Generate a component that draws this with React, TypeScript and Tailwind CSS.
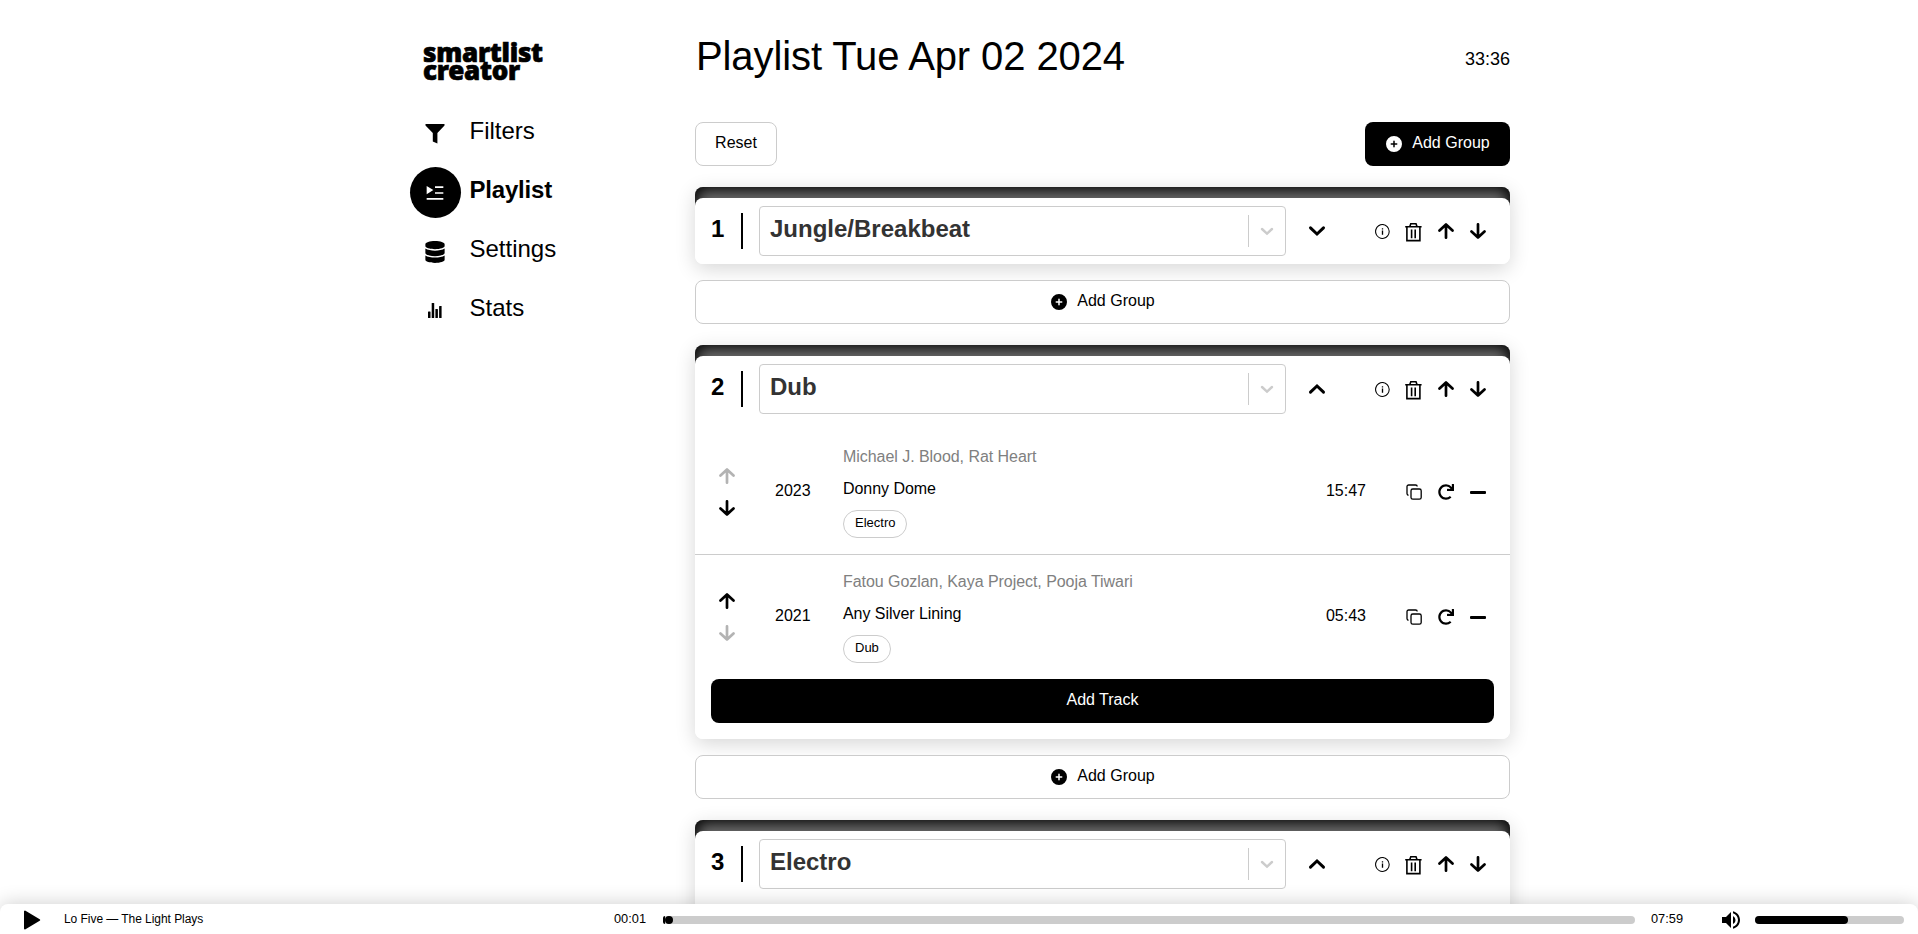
import React from "react";
import { FaDatabase, FaRedo } from "react-icons/fa";
import { FaCirclePlus } from "react-icons/fa6";
import { RiPlayList2Fill } from "react-icons/ri";
import { MdVolumeUp } from "react-icons/md";
import { VscInfo } from "react-icons/vsc";

type Track = { artist: string; title: string; year: string; duration: string; tag: string };
type Group = { name: string; open: boolean; tracks: Track[] };

const groups: Group[] = [
  { name: "Jungle/Breakbeat", open: false, tracks: [] },
  {
    name: "Dub",
    open: true,
    tracks: [
      { artist: "Michael J. Blood, Rat Heart", title: "Donny Dome", year: "2023", duration: "15:47", tag: "Electro" },
      { artist: "Fatou Gozlan, Kaya Project, Pooja Tiwari", title: "Any Silver Lining", year: "2021", duration: "05:43", tag: "Dub" },
    ],
  },
  { name: "Electro", open: true, tracks: [] },
];

function FilterIcon() {
  return (
    <svg width="20" height="20" viewBox="0 0 20 20">
      <path d="M.5 0h19v1.6L12.4 9v10.6L7.8 17.6V9L.5 1.6z" />
    </svg>
  );
}

function StatsIcon() {
  return (
    <svg width="14" height="15" viewBox="0 0 14 15">
      <rect x="0" y="8.5" width="2.5" height="6.5" rx=".5" />
      <rect x="3.7" y="0" width="2.5" height="15" rx=".5" />
      <rect x="7.4" y="6" width="2.5" height="9" rx=".5" />
      <rect x="11.1" y="3" width="2.5" height="12" rx=".5" />
    </svg>
  );
}

function Arrow({ down = false, muted = false }: { down?: boolean; muted?: boolean }) {
  return (
    <svg
      width="16"
      height="16"
      viewBox="0 0 16 16"
      fill="none"
      stroke="currentColor"
      strokeWidth="2.7"
      strokeLinecap="round"
      strokeLinejoin="round"
      className={muted ? "text-[#b3b3b3]" : "text-black"}
    >
      {down ? <path d="M8 1.3v13.2M1.5 8.4L8 14.5l6.5-6.1" /> : <path d="M8 14.7V1.5M1.5 7.6L8 1.5l6.5 6.1" />}
    </svg>
  );
}

function Chevron({ up = false }: { up?: boolean }) {
  return (
    <svg width="18" height="12" viewBox="0 0 18 12" fill="none" stroke="currentColor" strokeWidth="3" strokeLinecap="round">
      {up ? <path d="M2.5 9.2L9 3l6.5 6.2" /> : <path d="M2.5 2.8L9 9l6.5-6.2" />}
    </svg>
  );
}

function TrashIcon() {
  return (
    <svg width="17" height="20" viewBox="0 0 17 20" fill="none" stroke="currentColor" strokeWidth="1.6">
      <path d="M.2 4.8h16.4M4.8 4.5l1-2.7h5.2l1 2.7M1.9 5v13.6h13V5" />
      <path d="M6.6 7.5v8.7M10.2 7.5v8.7" />
    </svg>
  );
}

function CopyIcon() {
  return (
    <svg width="16" height="16" viewBox="0 0 16 16" fill="none" stroke="currentColor" strokeWidth="1.3">
      <rect x="5" y="5" width="10.2" height="10.2" rx="1.8" />
      <path d="M2.6 11.2A1.6 1.6 0 0 1 1 9.6V2.6A1.6 1.6 0 0 1 2.6 1h7a1.6 1.6 0 0 1 1.6 1.6" />
    </svg>
  );
}

function AddGroup({ wide = false }: { wide?: boolean }) {
  return (
    <button
      className={
        wide
          ? "flex h-11 w-full items-center justify-center gap-2.5 rounded-lg border border-[#ccc] bg-white pl-px"
          : "flex h-11 w-[145px] items-center justify-center gap-2.5 rounded-lg bg-black pl-px text-white"
      }
    >
      <FaCirclePlus size={16} />
      <span className="pb-[3px]">Add Group</span>
    </button>
  );
}

function TrackRow({ track, first, last }: { track: Track; first: boolean; last: boolean }) {
  return (
    <div className={last ? "flex h-[124px] items-center px-4" : "flex h-[125px] items-center border-b border-[#ccc] px-4"}>
      <div className="flex w-8 flex-col items-center gap-4">
        <Arrow muted={first} />
        <Arrow down muted={last} />
      </div>
      <div className="ml-8 w-[68px] pb-[3px]">{track.year}</div>
      <div className="flex h-[92px] flex-1 flex-col items-start">
        <div className="h-8 pt-px leading-5 tracking-[-0.05px] text-[#808080]">{track.artist}</div>
        <div className="h-8 pt-px leading-5 tracking-[-0.05px]">{track.title}</div>
        <div className="flex h-7 items-center rounded-full border border-[#ccc] px-[11px] pb-0.5 text-[13px]">{track.tag}</div>
      </div>
      <div className="pb-[3px]">{track.duration}</div>
      <div className="ml-10 flex w-20 items-center justify-between">
        <CopyIcon />
        <FaRedo size={16} />
        <span className="h-[3px] w-4 rounded-[1px] bg-black" />
      </div>
      <div className="w-2" />
    </div>
  );
}

function GroupCard({ group, index }: { group: Group; index: number }) {
  return (
    <section className="rounded-lg bg-white shadow-[0_5px_20px_rgba(0,0,0,0.16)]">
      <div className="-mb-[29px] h-10 rounded-t-lg bg-[#6a6a6a] shadow-[inset_0_0_14px_3px_#000]" />
      <div className="relative rounded-lg bg-white">
        <div className="flex h-[66px] items-center pr-6 pl-4">
          <div className="w-[30px] pb-1 text-2xl font-bold">{index + 1}</div>
          <div className="h-9 w-0.5 bg-black" />
          <div className="ml-4 flex h-[50px] w-[527px] items-center rounded border border-[#ccc] pl-2.5">
            <div className="flex-1 pb-1 text-2xl font-bold text-[#333]">{group.name}</div>
            <div className="h-8 w-px bg-[#ccc]" />
            <div className="flex w-9 justify-center text-[#ccc]">
              <svg width="14" height="9" viewBox="0 0 14 9" fill="none" stroke="currentColor" strokeWidth="2.4" strokeLinecap="round">
                <path d="M2 2l5 4.6L12 2" />
              </svg>
            </div>
          </div>
          <div className="ml-[22px]">
            <Chevron up={group.open} />
          </div>
          <div className="ml-auto flex items-center gap-4">
            <VscInfo size={17} />
            <div className="-ml-1 pt-0.5 pl-0.5">
              <TrashIcon />
            </div>
            <Arrow />
            <Arrow down />
          </div>
        </div>
        {group.open && (
          <div className="min-h-[60px] pt-2 pb-4">
            {group.tracks.map((t, i) => (
              <TrackRow key={t.title} track={t} first={i === 0} last={i === group.tracks.length - 1} />
            ))}
            {group.tracks.length > 0 && (
              <div className="px-4">
                <button className="block h-11 w-full rounded-lg bg-black pb-[3px] text-white">Add Track</button>
              </div>
            )}
          </div>
        )}
      </div>
    </section>
  );
}

function NavItem({ icon, label, active = false }: { icon: React.ReactNode; label: string; active?: boolean }) {
  return (
    <a className="flex h-[59px] items-center gap-[8.5px]">
      <span
        className={
          active
            ? "flex size-[51px] items-center justify-center rounded-full bg-black pr-px text-white"
            : "flex size-[51px] items-center justify-center pr-px"
        }
      >
        {icon}
      </span>
      <span className={active ? "pb-[5px] text-2xl font-bold tracking-[-0.2px]" : "pb-[5px] text-2xl"}>{label}</span>
    </a>
  );
}

export default function App() {
  return (
    <div className="flex h-[934px] flex-col overflow-hidden bg-white font-['Liberation_Sans',sans-serif] text-base leading-6 text-black">
      <div className="flex min-h-0 flex-1 overflow-hidden pl-[410px]">
        <aside className="w-[285px] shrink-0 pt-[38px]">
          <div className="h-[66px] pl-[13px] font-['Noto_Sans',sans-serif] text-[26px] leading-[18px] font-black tracking-[-0.25px] [-webkit-text-stroke:0.7px_black]">
            <div className="pt-[5px]">smartlist</div>
            <div>creator</div>
          </div>
          <nav>
            <NavItem icon={<FilterIcon />} label="Filters" />
            <NavItem icon={<RiPlayList2Fill size={20} />} label="Playlist" active />
            <NavItem icon={<FaDatabase size={22} />} label="Settings" />
            <NavItem icon={<StatsIcon />} label="Stats" />
          </nav>
        </aside>
        <main className="w-[815px] shrink-0">
          <div className="flex h-[122px] items-start justify-between">
            <h1 className="pt-[31px] pl-px text-[40px] leading-[50px] tracking-[-0.1px]">Playlist Tue Apr 02 2024</h1>
            <span className="pt-[47px] text-lg leading-6">33:36</span>
          </div>
          <div className="flex justify-between">
            <button className="h-11 w-[82px] rounded-lg border border-[#ccc] pb-[3px]">Reset</button>
            <AddGroup />
          </div>
          <div className="flex flex-col">
            {groups.map((g, i) => (
              <div key={g.name} className="pt-[21px]">
                <GroupCard group={g} index={i} />
                {i < groups.length - 1 && (
                  <div className="pt-4">
                    <AddGroup wide />
                  </div>
                )}
              </div>
            ))}
          </div>
        </main>
      </div>
      <footer className="relative flex h-[30px] shrink-0 items-center rounded-t-lg bg-white pt-0.5 pr-3.5 pl-[23px] text-xs shadow-[0_0_20px_rgba(0,0,0,0.2)]">
        <svg width="18" height="20" viewBox="0 0 18 20" stroke="black" strokeWidth="2" strokeLinejoin="round">
          <path d="M2 1.6v16.8L16.2 10z" />
        </svg>
        <div className="ml-[23px] w-[550px] pb-0.5 tracking-[-0.05px]">Lo Five — The Light Plays</div>
        <div className="w-[49px] pb-0.5 text-[12.8px]">00:01</div>
        <div className="flex h-2 w-[972px] items-center rounded-sm bg-[#ccc]">
          <div className="h-2 w-0.5 rounded-l-sm bg-black" />
          <div className="size-2 rounded-full bg-black" />
        </div>
        <div className="ml-4 w-[68px] pb-0.5 text-[12.8px]">07:59</div>
        <MdVolumeUp size={24} />
        <div className="ml-auto h-2 w-[149px] overflow-hidden rounded-sm bg-[#ccc]">
          <div className="h-2 w-[93px] rounded-r-full bg-black" />
        </div>
      </footer>
    </div>
  );
}
